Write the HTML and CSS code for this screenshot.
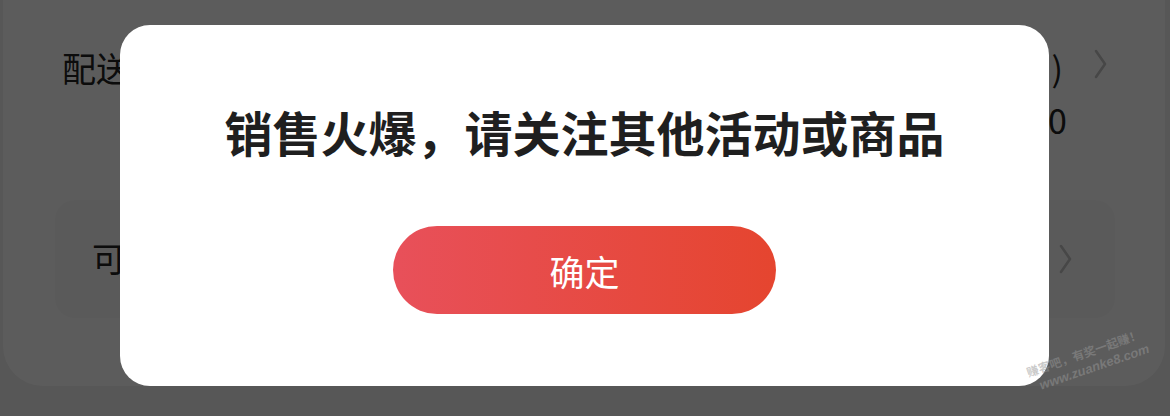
FILE: index.html
```html
<!DOCTYPE html>
<html lang="zh-CN">
<head>
  <meta charset="UTF-8" />
  <meta name="viewport" content="width=device-width, initial-scale=1.0" />
  <title>提示</title>
  <link rel="stylesheet" href="styles.css">
</head>
<body>

  <div class="page">
    <div class="row row-delivery">
      <span class="label">配送方式</span>
      <span class="value">(快递<span class="paren">)</span>
        <svg class="chevron" viewBox="0 0 14 30" width="14" height="30"><path d="M2 2 L11 15 L2 28" fill="none" stroke="currentColor" stroke-width="2.6" stroke-linecap="round" stroke-linejoin="round"/></svg>
      </span>
    </div>
    <div class="row row-fee">
      <span class="value">¥0.00</span>
    </div>
    <div class="coupon-card">
      <span class="label">可用优惠券</span>
      <svg class="chevron" viewBox="0 0 14 30" width="14" height="30"><path d="M2 2 L11 15 L2 28" fill="none" stroke="currentColor" stroke-width="2.6" stroke-linecap="round" stroke-linejoin="round"/></svg>
    </div>
  </div>

  <div class="mask"></div>

  <div class="dialog">
    <h2 class="dialog-title">销售火爆，请关注其他活动或商品</h2>
    <button class="confirm-btn">确定</button>
  </div>

  <div class="watermark">
    <span>赚客吧，有奖一起赚！</span>
    <span class="wm-url">www.zuanke8.com</span>
  </div>

</body>
</html>
```

FILE: styles.css
```css
* {
  box-sizing: border-box;
  margin: 0;
  padding: 0;
}

body {
  width: 1170px;
  height: 416px;
  overflow: hidden;
  position: relative;
  background: #f0f0f0;
  font-family: "Noto Sans CJK SC", "Noto Sans", sans-serif;
}

.page {
  height: 386px;
  margin: 0 5px 0 3px;
  background: #ffffff;
  border-radius: 0 0 40px 40px;
  padding-top: 42px;
  color: #222;
}

.row {
  display: flex;
  justify-content: space-between;
  align-items: center;
  padding: 0 57px 0 59px;
  font-size: 34px;
  height: 50px;
}

.row .value {
  display: flex;
  align-items: center;
}

.paren {
  margin-left: 4px;
}

.row-fee {
  justify-content: flex-end;
  padding-right: 98px;
  margin-top: 2px;
}

.chevron {
  color: #c4c4c4;
  display: block;
}

.row-delivery .chevron {
  margin-left: 31px;
  margin-top: -6px;
}

.coupon-card {
  display: flex;
  justify-content: space-between;
  align-items: center;
  margin: 56px 50px 0 52px;
  height: 118px;
  padding: 0 42px 0 37px;
  background: #fafafa;
  border-radius: 20px;
  font-size: 34px;
}

.coupon-card .label {
  margin-top: -4px;
}

.mask {
  position: absolute;
  inset: 0;
  background: rgba(0, 0, 0, 0.64);
}

.dialog {
  position: absolute;
  left: 120px;
  top: 25px;
  width: 929px;
  height: 361px;
  background: #ffffff;
  border-radius: 30px;
  display: flex;
  flex-direction: column;
  align-items: center;
  padding-top: 76px;
}

.dialog-title {
  font-size: 48px;
  font-weight: 700;
  line-height: 60px;
  color: #1f1f1f;
}

.confirm-btn {
  margin-top: 65px;
  width: 383px;
  height: 88px;
  border: none;
  border-radius: 44px;
  background: linear-gradient(90deg, #e8505a 0%, #e5452f 100%);
  color: #ffffff;
  font-family: "Noto Sans CJK SC", "Noto Sans", sans-serif;
  font-size: 35px;
  font-weight: 400;
  cursor: pointer;
}

.watermark {
  position: absolute;
  left: 1024px;
  top: 364px;
  display: flex;
  flex-direction: column;
  font-size: 12px;
  font-weight: 700;
  line-height: 17px;
  color: rgba(150, 150, 150, 0.5);
  transform: rotate(-19deg);
  transform-origin: left top;
}

.wm-url {
  font-family: "Liberation Sans", sans-serif;
  font-size: 13px;
  font-style: italic;
  padding-left: 8px;
}
```
